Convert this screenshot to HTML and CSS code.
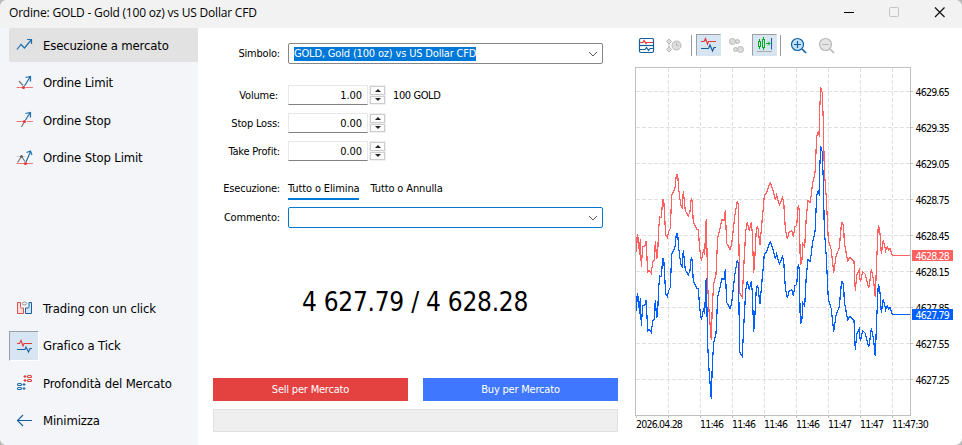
FILE: index.html
```html
<!DOCTYPE html>
<html lang="it">
<head>
<meta charset="utf-8">
<title>Ordine: GOLD</title>
<link rel="stylesheet" href="styles.css">
</head>
<body>
<div class="window">
<header class="titlebar">
  <span class="title">Ordine: GOLD - Gold (100 oz) vs US Dollar CFD</span>
  <svg class="controls" width="114" height="28" viewBox="0 0 114 28" fill="none">
    <path d="M4 12.500h10" stroke="#000"/><rect x="49.500" y="7.500" width="9" height="9" rx="1" stroke="#c4c4c4"/><path d="M95 7.500l9.500 9.500M104.500 7.500L95 17" stroke="#111" stroke-width="1.200"/>
  </svg>
</header>
<div class="body">
<nav class="sidebar">
  <div class="item active"><span class="ico"><svg width="18" height="18" viewBox="0 0 18 18" fill="none" stroke="#1d6fae" stroke-width="1.200"><path d="M1 13.500l4-5 3.500 3.500L15.500 3.500M11 3.500H15.500V8"/></svg></span>Esecuzione a mercato</div>
  <div class="item"><span class="ico"><svg width="18" height="18" viewBox="0 0 18 18" fill="none" stroke-width="1.200"><path d="M3 7l4 4.500" stroke="#777"/><path d="M8.500 12l5.500-9M9.500 3.500L14.500 2.500V7.500" stroke="#1d6fae"/><path d="M0.500 13.500H6M9.500 13.500H17" stroke="#e77"/><circle cx="7.500" cy="13.500" r="1.600" fill="#e33"/></svg></span>Ordine Limit</div>
  <div class="item"><span class="ico"><svg width="18" height="18" viewBox="0 0 18 18" fill="none" stroke-width="1.200"><path d="M5.500 16l2.500-4.500" stroke="#777"/><path d="M9.500 9l4.500-7M9.500 2.500L14.500 1.500V6.500" stroke="#1d6fae"/><path d="M0.500 10.500H7M11 10.500H17" stroke="#e77"/><circle cx="8.500" cy="10.500" r="1.600" fill="#e33"/></svg></span>Ordine Stop</div>
  <div class="item"><span class="ico"><svg width="18" height="18" viewBox="0 0 18 18" fill="none" stroke-width="1.200"><path d="M1.500 13.500l4-6 3.500 5" stroke="#777"/><path d="M0.500 7.500H9" stroke="#ccc"/><circle cx="5.500" cy="7.500" r="1.500" fill="#666"/><path d="M10 13l4.500-10.500M10.500 3.500l4-1.500 1.500 4" stroke="#1d6fae"/><path d="M0.500 14.500H8M11 14.500H17" stroke="#e77"/><circle cx="9.500" cy="14.500" r="1.600" fill="#e33"/></svg></span>Ordine Stop Limit</div>
  <div class="grow"></div>
  <div class="item"><span class="ico"><svg width="18" height="18" viewBox="0 0 18 18" fill="none"><path d="M1.500 3.500h3v4q0 1.500 1 1.500h2v5.500h-6z" fill="#fbdcd8" stroke="#d9534f"/><path d="M15.500 3.500h-2.500v4q0 1.500-1 1.500h-2.500v5.500h6z" fill="#cfe6f8" stroke="#1b5f9e"/><ellipse cx="8.500" cy="4.500" rx="2.200" ry="1.500" fill="#eee" stroke="#999"/></svg></span>Trading con un click</div>
  <div class="item"><span class="ico pressed"><svg width="18" height="18" viewBox="0 0 18 18" fill="none" stroke-width="1.100"><path d="M1 6.500H3.500L5 3.500 7 9 8 6.500H16" stroke="#e23b3b"/><path d="M1 12.500H9L10 10 12.500 15 14 11.500H16" stroke="#14609f"/></svg></span>Grafico a Tick</div>
  <div class="item"><span class="ico"><svg width="18" height="18" viewBox="0 0 18 18" fill="none" stroke-width="1.100"><g stroke="#d9413f"><path d="M7.500 2.500h3M9 1v3M7.500 6.500h3M9 5v3"/><rect x="11.500" y="1.500" width="4" height="2" rx="1"/><rect x="11.500" y="5.500" width="4" height="2" rx="1"/></g><g stroke="#1d6fae"><path d="M6.500 10.500h3M8 9v3M6.500 14.500h3M8 13v3"/><rect x="1.500" y="9.500" width="4" height="2" rx="1"/><rect x="1.500" y="13.500" width="4" height="2" rx="1"/></g></svg></span>Profondità del Mercato</div>
  <div class="item"><span class="ico"><svg width="18" height="18" viewBox="0 0 18 18" fill="none" stroke="#14609f" stroke-width="1.100"><path d="M16 8.500H1.500M7 3L1.500 8.500 7 14"/></svg></span>Minimizza</div>
</nav>

<main class="form">
  <div class="row symbol"><label>Simbolo:</label><div class="combo"><span class="selected">GOLD, Gold (100 oz) vs US Dollar CFD</span><svg width="10" height="6" viewBox="0 0 10 6" fill="none" stroke="#555"><path d="M1 1l4 4 4-4"/></svg></div></div>
  <div class="row num first"><label class="vol">Volume:</label><div class="value">1.00</div><div class="spin"><i class="up"></i><i class="down"></i></div><span class="unit">100 GOLD</span></div>
  <div class="row num"><label>Stop Loss:</label><div class="value">0.00</div><div class="spin"><i class="up"></i><i class="down"></i></div></div>
  <div class="row num"><label>Take Profit:</label><div class="value">0.00</div><div class="spin"><i class="up"></i><i class="down"></i></div></div>
  <div class="row fill"><label>Esecuzione:</label><span class="tab on">Tutto o Elimina</span><span class="tab">Tutto o Annulla</span></div>
  <div class="row comment"><label>Commento:</label><div class="combo focus"><span></span><svg width="10" height="6" viewBox="0 0 10 6" fill="none" stroke="#555"><path d="M1 1l4 4 4-4"/></svg></div></div>
  <div class="price">4 627.79 / 4 628.28</div>
  <div class="buttons"><div class="btn sell">Sell per Mercato</div><div class="btn buy">Buy per Mercato</div></div>
  <div class="status"></div>
</main>

<section class="chart">
  <div class="toolbar">
    <span class="tool first-tool"><svg width="18" height="18" viewBox="0 0 18 18" fill="none" stroke="#14609f" stroke-width="1.200"><rect x="1.500" y="1.500" width="14" height="14" rx="1.500" fill="#fff"/><path d="M1.500 8.500h14"/><path d="M2 5.500h3l1-2 2 3 1-1h6" stroke="#e23b3b"/><path d="M2 12.500h5l1.500-2 2 3 1.500-2h3"/></svg></span>
    <span class="tool"><svg width="18" height="18" viewBox="0 0 18 18" fill="#ddd" stroke="#b8b8b8"><path d="M4 2l2.500 2.500L4 7 1.500 4.500zM4 10l2.500 2.500L4 15l-2.500-2.500zM4 7v3"/><circle cx="11.500" cy="8.500" r="4.500"/><path d="M11.500 5.500v3h2" fill="none"/></svg></span>
    <span class="sep"></span>
    <span class="tool pressed"><svg width="18" height="18" viewBox="0 0 18 18" fill="none" stroke-width="1.200"><path d="M1 5.500H4L5.500 2.500 7.500 8 8.500 5.500H16" stroke="#e23b3b"/><path d="M1 12.500H8.500L10 9 12.500 15 14 11.500H16" stroke="#14609f"/></svg></span>
    <span class="tool"><svg width="18" height="18" viewBox="0 0 18 18" fill="#ddd" stroke="#b8b8b8"><circle cx="4.500" cy="4.500" r="3"/><circle cx="9.500" cy="4.500" r="2"/><circle cx="7.500" cy="12.500" r="2"/><circle cx="12.500" cy="12.500" r="3"/></svg></span>
    <span class="tool pressed"><svg width="18" height="22" viewBox="0 0 18 22" fill="none" stroke="#00a81c"><path d="M3.500 5v3M3.500 12v3M7.500 3v3M7.500 13v3M10 9.500h4M12 7.500l2 2-2 2"/><rect x="2.500" y="7.500" width="2" height="5"/><rect x="6.500" y="5.500" width="2" height="8"/><path d="M15.500 4v11.500" stroke="#14609f"/><path d="M1 17.500h15" stroke="#aaa"/></svg></span>
    <span class="sep"></span>
    <span class="tool zoom"><svg width="18" height="18" viewBox="0 0 18 18" fill="none" stroke="#14609f" stroke-width="1.200"><circle cx="7.500" cy="7.500" r="6" fill="#bfe1fa"/><path d="M4 7.500h7M7.500 4v7"/><path d="M12 12l4 4" stroke-width="1.700"/></svg></span>
    <span class="tool"><svg width="18" height="18" viewBox="0 0 18 18" fill="none" stroke="#b8b8b8" stroke-width="1.200"><circle cx="7.500" cy="7.500" r="6" fill="#e4e4e4"/><path d="M4 7.500h7"/><path d="M12 12l4 4" stroke-width="1.700"/></svg></span>
  </div>
  <svg class="plot" width="327" height="378" viewBox="635 67 327 378" fill="none">
    <g stroke="#e0e0e0" stroke-dasharray="4 2" shape-rendering="crispEdges">
      <path d="M636 91.500H910M636 127.500H910M636 163.500H910M636 199.500H910M636 235.500H910M636 271.500H910M636 307.500H910M636 343.500H910M636 379.500H910"/>
      <path d="M668.500 68V415M700.500 68V415M732.500 68V415M764.500 68V415M796.500 68V415M828.500 68V415M860.500 68V415M892.500 68V415"/>
    </g>
    <path shape-rendering="crispEdges" stroke="#c0c0c0" d="M635.500 67.500H910.500V415.500H635.500zM910 91.500h3M910 127.500h3M910 163.500h3M910 199.500h3M910 235.500h3M910 271.500h3M910 307.500h3M910 343.500h3M910 379.500h3M636.500 415v3M668.500 415v3M700.500 415v3M732.500 415v3M764.500 415v3M796.500 415v3M828.500 415v3M860.500 415v3M892.500 415v3"/>
    <defs><polyline id="ticks" points="636.300,251.700 637.300,234 638.300,245 638.700,237 639.300,255 640.300,239 641.300,266.500 642.700,246.700 645,246 646.300,240.700 647.300,265 648,272 649.300,270.300 651.300,273.300 652.700,261.700 654.300,260 655.300,241 656.700,259.300 657.700,252 658.700,228.300 659.700,217 661.300,217.700 662.700,200 663.700,199.300 664.300,210 665.700,235 667.300,237.300 668.700,231.700 670.300,228.300 671.700,195 673.300,192.300 675.300,186.700 676.300,174.300 677.700,175 678.700,189 680.700,205 682.300,207.700 683.300,191 685.300,210.700 688.300,215.700 690,211.700 691.300,198.300 692.300,202 693.300,222.300 696.700,229 698.300,230 699.700,248.300 701.300,260.700 702.700,254.300 703.700,249.300 704.700,255 705.700,226.700 706.300,219 707.700,285 708.700,306.700 711.300,340 712.300,305 713.700,284.300 716,274.300 717.700,237.300 719.300,231.700 721.700,220 724,220 725.300,210.300 726.700,243.300 730,249.300 731.700,244 734.700,216.700 737.300,201 738.300,204 739.700,293.300 742.300,297.300 743.700,268 745.700,231.700 747.300,222.300 749.300,231 751.300,222.300 752.300,233 753.700,273.300 754.700,260 756.300,230 757.700,225.700 760,245 762.300,218.300 763.300,208 764.300,195 766.700,192.700 768,188.300 770.300,182.700 773,190 775.300,200 776.700,195 779.300,205 781.300,200.700 782.300,197.300 783.700,201.700 785.300,228.300 787.300,239.300 789.300,231.700 791.700,230.700 793.300,236.700 795,226.700 796.700,225.700 798.300,205 799.300,210 800.300,264.300 801.700,263 803,244 804.700,247.300 806.300,216.700 808,200.700 810.300,202.500 812.700,182.500 815,173 816.700,136.700 817.700,133 819,135 819.700,110 820.700,87.300 822.300,93 823.300,121.700 824.300,170 826.300,198 828.300,240 831.300,250 833.700,272.700 836,256.700 839.300,247.300 841.500,223 842.500,222.300 843.700,227 844.300,243 847.700,260.700 850,257.300 854,261.700 855.300,290.700 856.700,275 859.300,270 860.300,282.300 862.700,271.700 865.300,274.300 868.700,288.300 870,280 871.300,269.300 873.300,278.300 875.300,297.300 876.700,260 878.300,225 879.700,230 880.700,243 881.300,254 883.300,240 885.700,250.700 887.300,246.700 888.500,250 890,248.300 892.300,255.500 910,255.500"/></defs>
    <use href="#ticks" class="ask"/><use href="#ticks" y="59" class="bid"/>
    <g class="axis">
      <text x="915.500" y="96">4629.65</text><text x="915.500" y="132">4629.35</text><text x="915.500" y="168">4629.05</text><text x="915.500" y="204">4628.75</text><text x="915.500" y="240">4628.45</text><text x="915.500" y="276">4628.15</text><text x="915.500" y="312">4627.85</text><text x="915.500" y="348">4627.55</text><text x="915.500" y="384">4627.25</text>
      <text x="636" y="428">2026.04.28</text><text x="700" y="428">11:46</text><text x="732" y="428">11:46</text><text x="764" y="428">11:46</text><text x="796" y="428">11:46</text><text x="828" y="428">11:47</text><text x="860" y="428">11:47</text><text x="892" y="428">11:47:30</text>
    </g>
    <rect x="912" y="250" width="41" height="11" fill="#ff6060"/><rect x="912" y="309" width="41" height="11" fill="#0060ff"/>
    <g class="axis tags"><text x="915.500" y="259.500">4628.28</text><text x="915.500" y="318.500">4627.79</text></g>
  </svg>
</section>
</div>
</div>
</body>
</html>
```
FILE: styles.css
```css
* { box-sizing: border-box; }
body { margin: 0; background: #bbb; }
.window { width: 962px; height: 445px; overflow: hidden; border-radius: 7px; background: #fff; font: 11px "DejaVu Sans Condensed", "DejaVu Sans", sans-serif; font-stretch: condensed; color: #000; }
.titlebar { height: 28px; background: #f2f2f2; display: flex; justify-content: space-between; padding-left: 9px; }
.title { font: 12px/25px "Open Sans", sans-serif; letter-spacing: -0.2px; }
.controls { margin-right: 8px; }
.body { display: flex; height: 417px; }
.sidebar { width: 198px; background: #f3f5f9; padding: 0 0 7.500px 9px; display: flex; flex-direction: column; gap: 3.500px; font-size: 13px; letter-spacing: -0.15px; }
.item { height: 34px; display: flex; align-items: center; gap: 4px; white-space: nowrap; flex: none; }
.item.active { background: #e2e2e2; border-radius: 2px 0 0 2px; }
.ico { width: 30px; height: 30px; display: flex; align-items: center; justify-content: center; }
.item > .ico > svg { margin-left: 1px; }
.pressed { background: #d7e5f3; border: 1px solid; border-color: #9b9fa5 #fff #fff #9b9fa5; }
.grow { flex: 1; }
.form { width: 420px; padding-left: 15px; display: flex; flex-direction: column; letter-spacing: -0.2px; }
.row { display: flex; align-items: center; flex: none; }
.row label { width: 67px; margin-right: 8px; text-align: right; white-space: nowrap; }
.row label.vol { padding-right: 2px; }
.combo { width: 315px; height: 21px; border: 1px solid #868686; border-radius: 2px; display: flex; align-items: center; justify-content: space-between; padding: 0 4px 0 5px; }
.combo.focus { border-color: #0078d4; }
.selected { background: #0078d7; color: #fff; line-height: 14px; white-space: nowrap; letter-spacing: -0.17px; }
.symbol { height: 21px; margin-top: 15px; }
.num { height: 20px; margin-bottom: 8px; }
.num label, .unit { padding-top: 1px; }
.first { margin-top: 21px; }
.value { width: 80px; height: 20px; border: 1px solid #e8e8e8; border-bottom-color: #808080; text-align: right; padding-right: 5px; line-height: 19px; letter-spacing: -0.1px; }
.spin { width: 17px; height: 20px; margin-left: 1px; background: #f0f0f0; display: flex; flex-direction: column; gap: 1px; padding: 1px; }
.spin i { flex: 1; background: #fdfdfd; border: 1px solid #ccc; display: flex; align-items: center; justify-content: center; }
.spin i::before { content: ""; border: 3px solid transparent; }
.spin .up::before { border-top-width: 0; border-bottom-color: #222; }
.spin .down::before { border-bottom-width: 0; border-top-color: #222; }
.unit { margin-left: 7px; letter-spacing: -0.4px; }
.fill { height: 22px; margin-top: 9px; }
.fill label { padding-bottom: 1px; }
.tab { height: 21px; line-height: 20px; margin-right: 11px; white-space: nowrap; letter-spacing: -0.12px; }
.tab.on { border-bottom: 2px solid #0078d4; }
.comment { margin-top: 7px; height: 21px; }
.price { height: 34px; line-height: 34px; margin-top: 57px; font-size: 26px; text-align: center; width: 404px; letter-spacing: -0.25px; }
.buttons { display: flex; gap: 15px; margin-top: 59px; width: 405px; }
.btn { flex: 1; height: 23px; line-height: 24px; text-align: center; color: #fff; }
.sell { background: #e44141; }
.buy { background: #3f78ff; }
.status { width: 405px; height: 23px; margin-top: 8px; background: #efefef; border: 1px solid #e1e1e1; }
.chart { width: 344px; padding-left: 17px; display: flex; flex-direction: column; }
.toolbar { height: 39px; padding-top: 6px; display: flex; }
.tool { width: 25px; height: 22px; display: flex; align-items: center; justify-content: center; margin-right: 3px; }
.tool:not(.pressed) svg { margin-top: 2px; }
.first-tool { margin-left: -1px; }
.first-tool + .tool { margin-right: 4px; margin-left: -1px; width: 26px; }
.tool.zoom { margin-left: 1px; }
.tool.pressed { border-color: #9b9fa5 #d7e5f3 #d7e5f3 #9b9fa5; }
.sep { width: 1px; height: 21px; background: #999; margin: 1px 4px 0 0; }
.ask, .bid { stroke-width: 1.200; shape-rendering: crispEdges; }
.ask { stroke: #ff6060; }
.bid { stroke: #0060ff; }
.axis { fill: #000; font-size: 10.500px; letter-spacing: -0.8px; }
.tags { fill: #fff; }
```
